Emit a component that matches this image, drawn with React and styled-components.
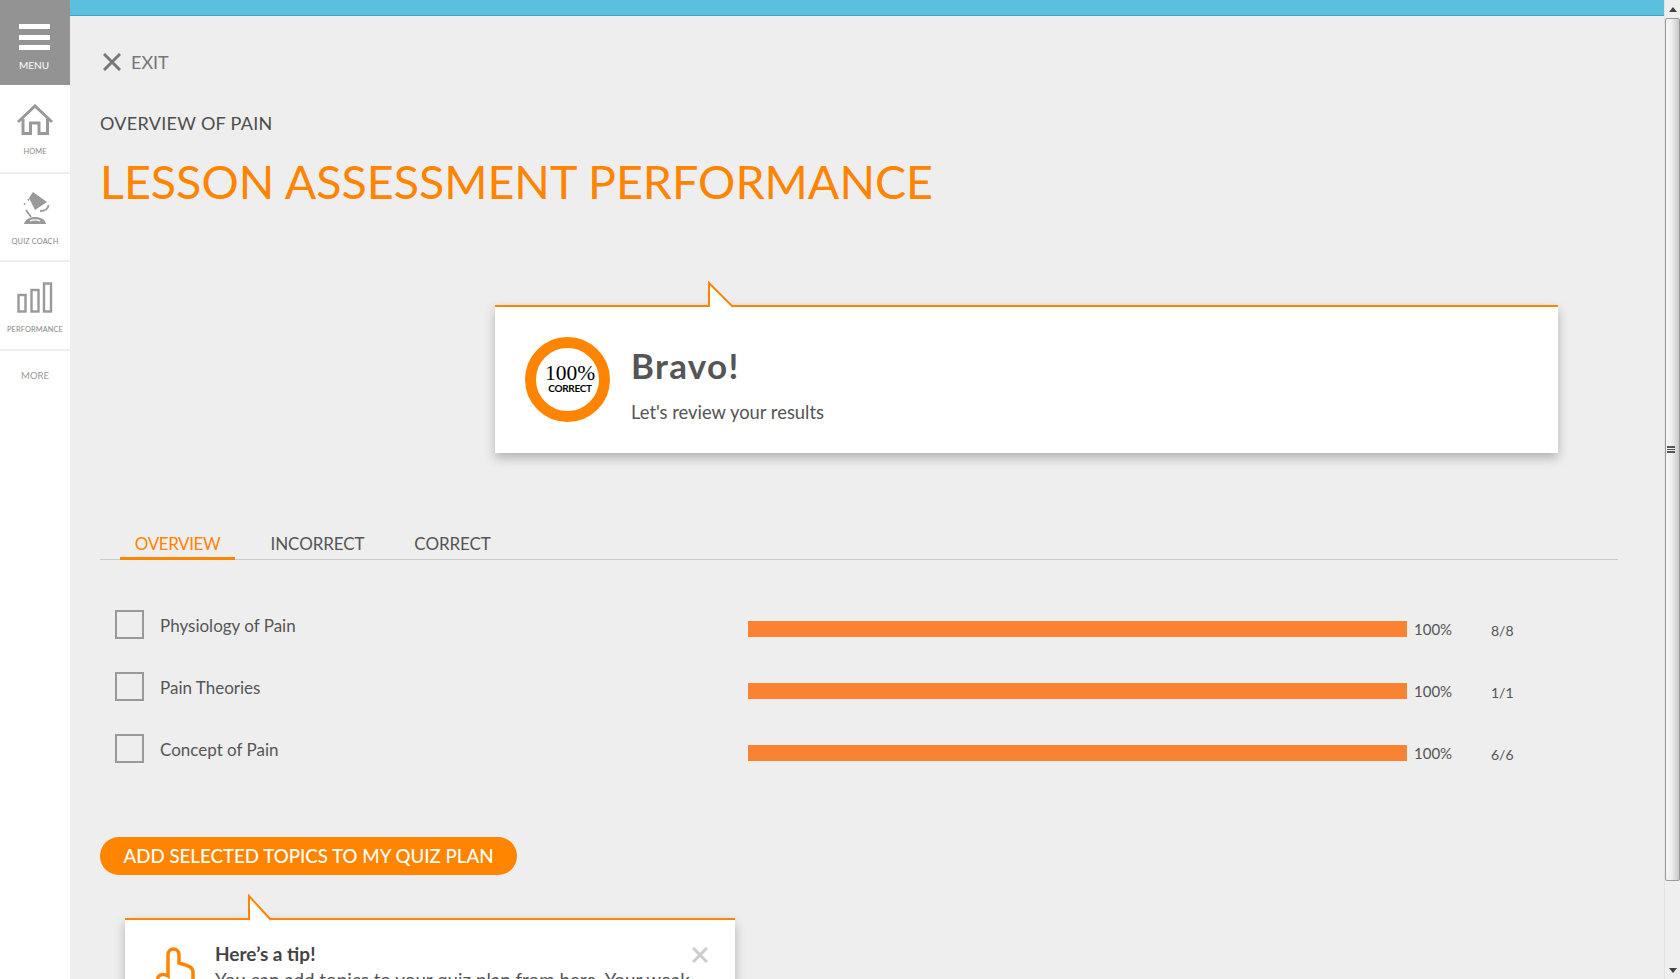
import React from "react";
import styled, { createGlobalStyle } from "styled-components";

const ORANGE = "#ff8400";
const SANS = `"Lato", "Open Sans", sans-serif`;

const GlobalStyle = createGlobalStyle`
    html, body {
        margin: 0;
        height: 100%;
        overflow: hidden;
        background: #eeeeee;
        font-family: ${SANS};
    }
`;

const Page = styled.div`
    display: flex;
    width: 1680px;
    height: 979px;
    overflow: hidden;
`;

const Sidebar = styled.nav`
    flex: none;
    width: 70px;
    background: #fff;
    display: flex;
    flex-direction: column;
`;

const MenuButton = styled.div`
    height: 85px;
    background: #939393;
    color: #fff;
    display: flex;
    flex-direction: column;
    align-items: center;
    padding-top: 24px;
    box-sizing: border-box;
    font-size: 10px;
`;

const Burger = styled.div`
    width: 31px;
    height: 26px;
    margin-left: -2px;
    display: flex;
    flex-direction: column;
    justify-content: space-between;
    span {
        height: 5px;
        background: #fff;
    }
`;

const MenuLabel = styled.div`
    margin-top: 9px;
    margin-left: -2px;
    line-height: 12px;
`;

const NavItem = styled.div`
    height: ${(p) => p.$height}px;
    box-sizing: border-box;
    border-bottom: 2px solid #eee;
    display: flex;
    flex-direction: column;
    align-items: center;
    padding-top: ${(p) => p.$top}px;
    color: #888;
    font-size: 7.4px;
    letter-spacing: 0.1px;
`;

const NavLabel = styled.div`
    line-height: 10px;
    margin-top: ${(p) => p.$gap}px;
`;

const MoreItem = styled.div`
    padding-top: 19px;
    text-align: center;
    color: #999;
    font-size: 9.5px;
    line-height: 12px;
`;

const Main = styled.main`
    flex: 1;
    min-width: 0;
    display: flex;
    flex-direction: column;
    overflow: hidden;
`;

const TopBar = styled.div`
    flex: none;
    height: 16px;
    box-sizing: border-box;
    background: #5bc0de;
    border-bottom: 1px solid #4aa3bd;
`;

const Content = styled.div`
    padding: 0 46px 0 30px;
`;

const ExitRow = styled.div`
    display: flex;
    align-items: center;
    gap: 10px;
    margin-top: 34px;
    margin-left: 3px;
    height: 24px;
    color: #777;
    font-size: 18px;
`;

const Lesson = styled.div`
    margin-top: 37px;
    font-size: 18px;
    line-height: 24px;
    letter-spacing: 0.3px;
    color: #4d4d4d;
`;

const Title = styled.h1`
    margin: 18px 0 0;
    font-size: 46.6px;
    line-height: 56px;
    font-weight: 400;
    color: ${ORANGE};
    white-space: nowrap;
`;

const Callout = styled.section`
    position: relative;
    background: #fff;
    border-top: 2px solid ${ORANGE};
    box-shadow: 0 5px 10px rgba(0, 0, 0, 0.25);
    box-sizing: border-box;
`;

const Notch = styled.svg`
    position: absolute;
    left: ${(p) => p.$left}px;
    top: ${(p) => p.$top}px;
`;

const BravoCard = styled(Callout)`
    width: 1063px;
    height: 148px;
    margin: 96px 0 0 395px;
    display: flex;
    align-items: flex-start;
    padding: 30px 0 0 30px;
`;

const Ring = styled.div`
    flex: none;
    width: 85px;
    height: 85px;
    box-sizing: border-box;
    border: 11px solid ${ORANGE};
    border-radius: 50%;
    display: flex;
    flex-direction: column;
    align-items: center;
    padding-top: 15px;
    padding-left: 5px;
    color: #000;
`;

const RingValue = styled.div`
    font-family: "Liberation Serif", serif;
    font-size: 21.5px;
    line-height: 20px;
`;

const RingLabel = styled.div`
    font-size: 10px;
    font-weight: 700;
    line-height: 11px;
    letter-spacing: -0.3px;
`;

const BravoText = styled.div`
    margin-left: 21px;
`;

const BravoTitle = styled.div`
    font-size: 35px;
    line-height: 44px;
    font-weight: 700;
    color: #555;
    letter-spacing: 1.3px;
    margin-top: 6px;
`;

const BravoSub = styled.div`
    margin-top: 13px;
    font-size: 18.4px;
    line-height: 24px;
    color: #555;
`;

const Tabs = styled.div`
    display: flex;
    margin-top: 73px;
    height: 34px;
    box-sizing: border-box;
    border-bottom: 1px solid #ccc;
    padding-left: 20px;
`;

const Tab = styled.div`
    width: ${(p) => p.$width}px;
    height: 34px;
    box-sizing: border-box;
    text-align: center;
    font-size: 17px;
    line-height: 36px;
    letter-spacing: ${(p) => (p.$active ? "-0.4px" : "-0.1px")};
    color: ${(p) => (p.$active ? ORANGE : "#555")};
    border-bottom: ${(p) => (p.$active ? `3px solid ${ORANGE}` : "none")};
`;

const TopicList = styled.div`
    margin-top: 50px;
    display: flex;
    flex-direction: column;
    gap: 33px;
`;

const TopicRow = styled.div`
    display: grid;
    grid-template-columns: 29px 604px 659px 84px auto;
    align-items: center;
    height: 29px;
    padding-left: 15px;
    color: #555;
    font-size: 17px;
`;

const Checkbox = styled.div`
    width: 29px;
    height: 29px;
    box-sizing: border-box;
    border: 2px solid #999;
`;

const TopicName = styled.div`
    padding-left: 16px;
    margin-top: 2px;
`;

const Bar = styled.div`
    height: 16px;
    margin-top: 9px;
    background: #f98233;
`;

const Percent = styled.div`
    padding-left: 7px;
    font-size: 15px;
    margin-top: 9px;
`;

const Count = styled.div`
    font-size: 14px;
    margin-top: 11px;
`;

const PrimaryButton = styled.button`
    display: block;
    margin-top: 74px;
    width: 417px;
    height: 38px;
    border: none;
    border-radius: 19px;
    background: ${ORANGE};
    color: #fff;
    font-family: ${SANS};
    font-size: 18.7px;
    font-weight: 500;
    padding: 0;
`;

const TipCard = styled(Callout)`
    width: 610px;
    height: 200px;
    margin: 43px 0 0 25px;
    display: flex;
    padding: 22px 0 0 30px;
`;

const TipText = styled.div`
    margin-left: 20px;
`;

const TipTitle = styled.div`
    font-size: 19px;
    line-height: 24px;
    font-weight: 700;
    color: #444;
`;

const TipBody = styled.div`
    margin-top: 2px;
    font-size: 18.8px;
    line-height: 24px;
    color: #555;
    width: 490px;
    white-space: nowrap;
`;

const CloseIcon = styled.svg`
    position: absolute;
    right: 27px;
    top: 27px;
`;

const Scrollbar = styled.div`
    flex: none;
    width: 16px;
    height: 979px;
    background: #efefef;
    border-left: 1px solid #e4e4e4;
    box-sizing: border-box;
    display: flex;
    flex-direction: column;
    align-items: center;
`;

const ArrowBox = styled.div`
    flex: none;
    height: 18px;
    display: flex;
    align-items: center;
    justify-content: center;
`;

const Thumb = styled.div`
    flex: none;
    width: 15px;
    height: 863px;
    box-sizing: border-box;
    border: 1px solid #999;
    border-radius: 2px;
    padding-right: 4px;
    background: linear-gradient(to right, #f3f3f3, #f0f0f0 40%, #c8c8ca);
    display: flex;
    flex-direction: column;
    align-items: center;
    justify-content: center;
    gap: 1px;
    span {
        width: 8px;
        height: 1.5px;
        background: #555;
    }
`;

const TrackFill = styled.div`
    flex: 1;
`;

const Pointer = ({ left, top, width, height }) => (
    <Notch $left={left} $top={top} width={width + 2} height={height + 2}>
        <path
            d={`M1 ${height + 1} V2 L${width} ${height + 1}`}
            fill="#fff"
            stroke={ORANGE}
            strokeWidth="2"
        />
    </Notch>
);

const topics = [
    { name: "Physiology of Pain", count: "8/8" },
    { name: "Pain Theories", count: "1/1" },
    { name: "Concept of Pain", count: "6/6" },
];

const App = () => (
    <>
        <GlobalStyle />
        <Page>
            <Sidebar>
                <MenuButton>
                    <Burger>
                        <span />
                        <span />
                        <span />
                    </Burger>
                    <MenuLabel>MENU</MenuLabel>
                </MenuButton>
                <NavItem $height={89} $top={19}>
                    <svg width="36" height="31" viewBox="0 0 36 31" fill="none" stroke="#999" strokeWidth="3">
                        <path d="M1 18 L18 2 L35 18" />
                        <path d="M6 15 V29.5 H13.5 V19 H22 V29.5 H30.5 V15" />
                    </svg>
                    <NavLabel $gap={12}>HOME</NavLabel>
                </NavItem>
                <NavItem $height={88} $top={16}>
                    <svg width="30" height="36" viewBox="0 0 30 36" fill="#999">
                        <path d="M13 2 L27 12 L15 20 L9 8 Z" />
                        <path d="M20 21 Q28 21 28.5 15" fill="none" stroke="#999" strokeWidth="1.8" />
                        <path d="M9 9 L2 17" fill="none" stroke="#999" strokeWidth="1.6" strokeDasharray="1.8 4" />
                        <path d="M6 20 L11 27" fill="none" stroke="#999" strokeWidth="1.8" />
                        <path d="M4 34 C5 29 10 27 15 27 C20 27 25 29 26 34 Z" />
                        <path d="M10 31 C12 29.5 18 29.5 20 31" fill="none" stroke="#fff" strokeWidth="1.4" />
                    </svg>
                    <NavLabel $gap={11}>QUIZ COACH</NavLabel>
                </NavItem>
                <NavItem $height={89} $top={20}>
                    <svg width="36" height="31" viewBox="0 0 36 31" fill="none" stroke="#999" strokeWidth="2.4">
                        <rect x="1.5" y="13" width="7" height="16.5" />
                        <rect x="14.5" y="8" width="7" height="21.5" />
                        <rect x="27" y="1.5" width="7" height="28" />
                    </svg>
                    <NavLabel $gap={12}>PERFORMANCE</NavLabel>
                </NavItem>
                <MoreItem>MORE</MoreItem>
            </Sidebar>
            <Main>
                <TopBar />
                <Content>
                    <ExitRow>
                        <svg width="18" height="18" viewBox="0 0 18 18" stroke="#777" strokeWidth="3">
                            <path d="M1 1 L17 17 M17 1 L1 17" />
                        </svg>
                        EXIT
                    </ExitRow>
                    <Lesson>OVERVIEW OF PAIN</Lesson>
                    <Title>LESSON ASSESSMENT PERFORMANCE</Title>
                    <BravoCard>
                        <Pointer left={213} top={-26} width={25} height={25} />
                        <Ring>
                            <RingValue>100%</RingValue>
                            <RingLabel>CORRECT</RingLabel>
                        </Ring>
                        <BravoText>
                            <BravoTitle>Bravo!</BravoTitle>
                            <BravoSub>Let's review your results</BravoSub>
                        </BravoText>
                    </BravoCard>
                    <Tabs>
                        <Tab $width={115} $active>OVERVIEW</Tab>
                        <Tab $width={165}>INCORRECT</Tab>
                        <Tab $width={105}>CORRECT</Tab>
                    </Tabs>
                    <TopicList>
                        {topics.map((topic) => (
                            <TopicRow key={topic.name}>
                                <Checkbox />
                                <TopicName>{topic.name}</TopicName>
                                <Bar />
                                <Percent>100%</Percent>
                                <Count>{topic.count}</Count>
                            </TopicRow>
                        ))}
                    </TopicList>
                    <PrimaryButton>ADD SELECTED TOPICS TO MY QUIZ PLAN</PrimaryButton>
                    <TipCard>
                        <Pointer left={123} top={-26} width={23} height={25} />
                        <svg width="40" height="60" viewBox="0 0 40 60" fill="none" stroke={ORANGE} strokeWidth="3.5">
                            <path d="M4 40 C0 35 6 30 13 34 V13 C13 5 24 5 24 13 V21 C30 23 38 24 38 30 V60" />
                        </svg>
                        <TipText>
                            <TipTitle>Here’s a tip!</TipTitle>
                            <TipBody>You can add topics to your quiz plan from here. Your weak</TipBody>
                        </TipText>
                        <CloseIcon width="16" height="16" viewBox="0 0 16 16" stroke="#ccc" strokeWidth="3">
                            <path d="M1 1 L15 15 M15 1 L1 15" />
                        </CloseIcon>
                    </TipCard>
                </Content>
            </Main>
            <Scrollbar>
                <ArrowBox>
                    <svg width="8" height="5"><path d="M4 0 L8 5 H0 Z" fill="#444" /></svg>
                </ArrowBox>
                <Thumb>
                    <span />
                    <span />
                    <span />
                </Thumb>
                <TrackFill />
                <ArrowBox>
                    <svg width="8" height="5"><path d="M0 0 H8 L4 5 Z" fill="#444" /></svg>
                </ArrowBox>
            </Scrollbar>
        </Page>
    </>
);

export default App;
